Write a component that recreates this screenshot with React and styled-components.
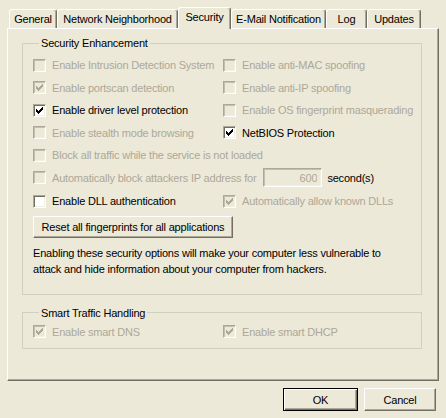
import React from "react";
import styled, { createGlobalStyle } from "styled-components";

const GlobalStyle = createGlobalStyle`
  html, body {
    margin: 0;
    padding: 0;
    background: #ece9d8;
  }
  body {
    font-family: "Liberation Sans", Arial, sans-serif;
    font-size: 11px;
    letter-spacing: -0.2px;
    color: #000;
  }
`;

const Dialog = styled.div`
  width: 446px;
  height: 418px;
  box-sizing: border-box;
  padding: 7px 7px 0;
  display: flex;
  flex-direction: column;
`;

const TabStrip = styled.div`
  display: flex;
  align-items: flex-end;
  height: 21px;
  padding-left: 2px;
`;

const Tab = styled.div`
  position: relative;
  z-index: ${(p) => (p.$active ? 2 : 0)};
  box-sizing: border-box;
  width: ${(p) => p.$w}px;
  height: ${(p) => (p.$active ? 22 : 19)}px;
  margin-bottom: ${(p) => (p.$active ? -1 : 0)}px;
  padding-bottom: ${(p) => (p.$active ? 3 : 0)}px;
  background: #ece9d8;
  border-top: 1px solid #fff;
  border-left: 1px solid #fff;
  border-right: 1px solid #716f64;
  box-shadow: inset -1px 0 0 #aca899;
  border-radius: 3px 3px 0 0;
  display: flex;
  align-items: center;
  justify-content: center;
  white-space: nowrap;
`;

const Panel = styled.div`
  box-sizing: border-box;
  height: 353px;
  border: 1px solid;
  border-color: #fff #716f64 #716f64 #fff;
  box-shadow: inset -1px -1px 0 #aca899;
  padding: 7px 16px 0 14px;
`;

const Group = styled.fieldset`
  margin: 0 0 ${(p) => p.$after || 0}px;
  padding: ${(p) => p.$pad};
  border: 1px solid #d0d0bf;
  min-width: 0;
`;

const GroupTitle = styled.legend`
  margin-left: 6px;
  padding: 0 2px;
  line-height: 14px;
`;

const OptionGrid = styled.div`
  display: grid;
  grid-template-columns: 190px 1fr;
  grid-auto-rows: 22.5px;
  align-items: center;
`;

const Option = styled.label`
  display: flex;
  align-items: center;
  gap: 6px;
  grid-column: ${(p) => (p.$wide ? "1 / -1" : "auto")};
  margin-top: ${(p) => p.$shift || 0}px;
  white-space: nowrap;
`;

const Box = styled.span`
  flex: none;
  width: 13px;
  height: 13px;
  box-sizing: border-box;
  border: 1px solid;
  border-color: #aca899 #fff #fff #aca899;
  box-shadow: inset 1px 1px 0 ${(p) => (p.$disabled ? "#c2bfb0" : "#716f64")},
    inset -1px -1px 0 #f1efe2;
  background: ${(p) => (p.$disabled ? "#ece9d8" : "#fff")};
  display: flex;
  align-items: center;
  justify-content: center;
  color: ${(p) => (p.$disabled ? "#aca899" : "#000")};
`;

const Text = styled.span`
  color: ${(p) => (p.$disabled ? "#aca899" : "#000")};
`;

const InlineRow = styled.div`
  grid-column: 1 / -1;
  display: flex;
  align-items: center;
`;

const SecondsField = styled.input`
  box-sizing: border-box;
  width: 59px;
  height: 19px;
  margin: 0 5px 0 7px;
  padding: 0 4px 0 0;
  font: inherit;
  letter-spacing: inherit;
  text-align: right;
  color: #aca899;
  background: #ece9d8;
  border: 1px solid;
  border-color: #aca899 #fff #fff #aca899;
  box-shadow: inset 1px 1px 0 #c2bfb0, inset -1px -1px 0 #f1efe2;
  outline: none;
`;

const Button = styled.button`
  box-sizing: border-box;
  width: ${(p) => p.$w}px;
  height: ${(p) => p.$h || 23}px;
  margin: ${(p) => p.$m || 0};
  padding: 0;
  font: inherit;
  letter-spacing: inherit;
  color: #000;
  background: #ece9d8;
  border: 1px solid;
  border-color: ${(p) =>
    p.$default ? "#000" : "#fff #716f64 #716f64 #fff"};
  box-shadow: ${(p) =>
    p.$default
      ? "inset 1px 1px 0 #fff, inset -1px -1px 0 #716f64, inset -2px -2px 0 #aca899"
      : "inset -1px -1px 0 #aca899"};
  display: block;
`;

const Note = styled.p`
  margin: 7px 0 0;
  line-height: 16px;
`;

const Footer = styled.div`
  display: flex;
  justify-content: flex-end;
  gap: 6px;
  padding: 7px 3px 0 0;
`;

const Tick = () => (
  <svg width="7" height="7" viewBox="0 0 7 7" shapeRendering="crispEdges">
    <path
      fill="currentColor"
      d="M0 2h1v3H0z M1 3h1v3H1z M2 4h1v3H2z M3 3h1v3H3z M4 2h1v3H4z M5 1h1v3H5z M6 0h1v3H6z"
    />
  </svg>
);

const Check = ({ label, checked, disabled, wide, shift }) => (
  <Option $wide={wide} $shift={shift}>
    <Box $disabled={disabled}>{checked && <Tick />}</Box>
    <Text $disabled={disabled}>{label}</Text>
  </Option>
);

const tabs = [
  { name: "General", w: 48 },
  { name: "Network Neighborhood", w: 121 },
  { name: "Security", w: 53, active: true },
  { name: "E-Mail Notification", w: 95 },
  { name: "Log", w: 41 },
  { name: "Updates", w: 54 },
];

export default function App() {
  return (
    <>
      <GlobalStyle />
      <Dialog>
        <TabStrip>
          {tabs.map((t) => (
            <Tab key={t.name} $w={t.w} $active={t.active}>
              {t.name}
            </Tab>
          ))}
        </TabStrip>
        <Panel>
          <Group $pad="4px 10px 17px" $after={11}>
            <GroupTitle>Security Enhancement</GroupTitle>
            <OptionGrid>
              <Check label="Enable Intrusion Detection System" disabled />
              <Check label="Enable anti-MAC spoofing" disabled />
              <Check label="Enable portscan detection" checked disabled />
              <Check label="Enable anti-IP spoofing" disabled />
              <Check label="Enable driver level protection" checked />
              <Check label="Enable OS fingerprint masquerading" disabled />
              <Check label="Enable stealth mode browsing" disabled />
              <Check label="NetBIOS Protection" checked />
              <Check
                label="Block all traffic while the service is not loaded"
                disabled
                wide
              />
              <InlineRow>
                <Check
                  label="Automatically block attackers IP address for"
                  disabled
                />
                <SecondsField value="600" disabled readOnly />
                <Text>second(s)</Text>
              </InlineRow>
              <Check label="Enable DLL authentication" shift={2} />
              <Check
                label="Automatically allow known DLLs"
                checked
                disabled
                shift={2}
              />
            </OptionGrid>
            <Button $w={200} $h={22} $m="4px 0 0">
              Reset all fingerprints for all applications
            </Button>
            <Note>
              Enabling these security options will make your computer less
              vulnerable to
              <br />
              attack and hide information about your computer from hackers.
            </Note>
          </Group>
          <Group $pad="1px 10px 5px">
            <GroupTitle>Smart Traffic Handling</GroupTitle>
            <OptionGrid>
              <Check label="Enable smart DNS" checked disabled />
              <Check label="Enable smart DHCP" checked disabled />
            </OptionGrid>
          </Group>
        </Panel>
        <Footer>
          <Button $w={75} $default>
            OK
          </Button>
          <Button $w={72}>Cancel</Button>
        </Footer>
      </Dialog>
    </>
  );
}
